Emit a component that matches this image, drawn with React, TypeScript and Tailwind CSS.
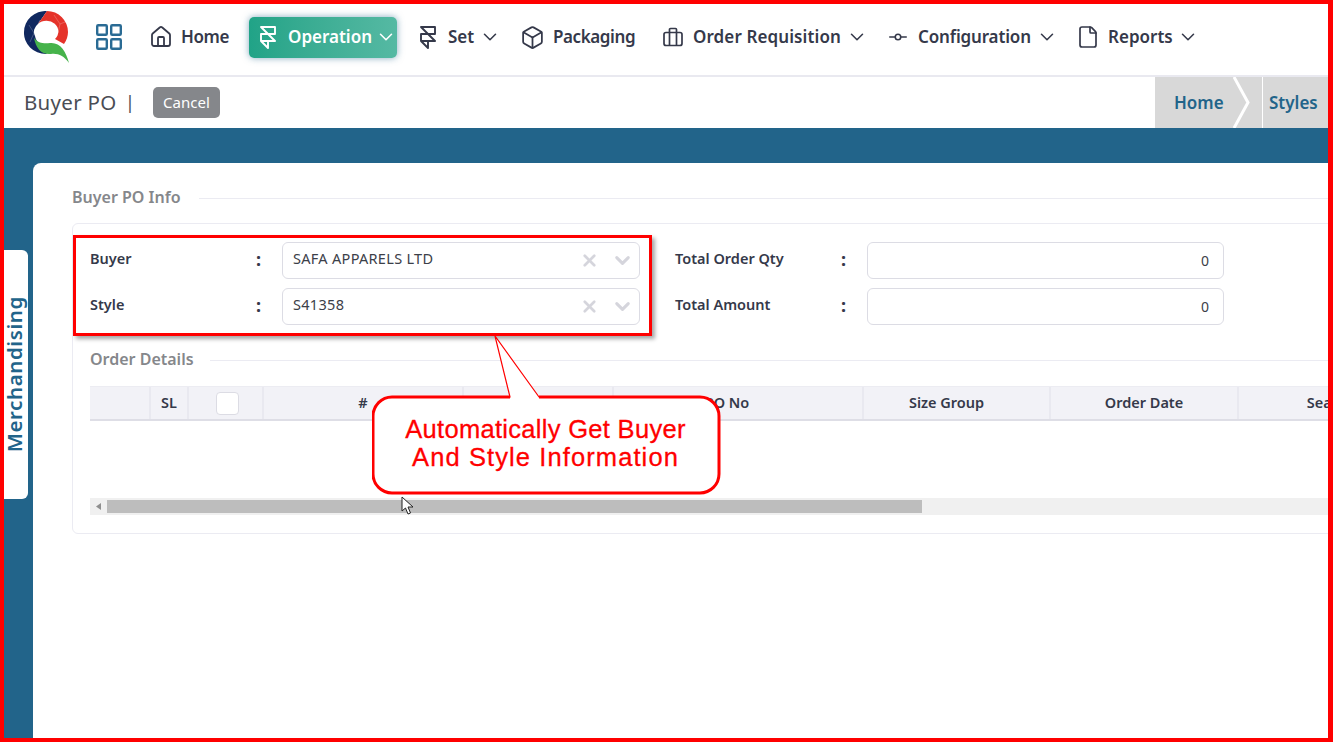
import React from "react";
import { Box, ChevronDown, File, Framer, GitCommitHorizontal, House, X } from "lucide-react";

const font = "font-['Noto_Sans',sans-serif]";

const NavItem: React.FC<{
	icon: React.ReactNode;
	label: string;
	labelClass: string;
	gap: string;
	caretGap?: string;
	className?: string;
}> = ({ icon, label, labelClass, gap, caretGap, className }) => (
	<div className={`flex items-center shrink-0 ${className ?? ""}`}>
		{icon}
		<span className={`${gap} ${labelClass} text-[17px] font-semibold text-[#35394a] whitespace-nowrap`}>{label}</span>
		{caretGap && <ChevronDown size={22} strokeWidth={1.7} className={`${caretGap} text-[#35394a]`} />}
	</div>
);

const Logo = () => (
	<svg width="46" height="52" viewBox="0 0 46 52" className="shrink-0">
		<path d="M23 0 A22 21 0 0 0 0 21 A22 21 0 0 0 22 43 L26 40 C16 36 12 30 11 25 A11 10 0 0 1 14 13 Z" fill="#10285f" />
		<path d="M23 0 A21 21 0 0 1 44 21 A21 21 0 0 1 40 33 L31 28 A11 10 0 0 0 14 13 Z" fill="#e5332a" />
		<path d="M10 27 C14 32 20 33 26 32 C36 31 42 40 45 52 C40 45 34 42 27 43 C18 44 12 38 10 27 Z" fill="#46b34b" />
		<path d="M5 14L10 22L6 31M10 22L16 9M30 4L36 13L41 11M36 13L34 22" fill="none" stroke="#ffffff" strokeOpacity="0.35" strokeWidth="0.6" />
	</svg>
);

const GridIcon = () => (
	<svg width="26" height="26" viewBox="0 0 26 26" fill="none" stroke="#2a6b94" strokeWidth="2.4" className="shrink-0">
		<rect x="1.2" y="1.2" width="9.6" height="9.6" rx="1" />
		<rect x="15.2" y="1.2" width="9.6" height="9.6" rx="1" />
		<rect x="1.2" y="15.2" width="9.6" height="9.6" rx="1" />
		<rect x="15.2" y="15.2" width="9.6" height="9.6" rx="1" />
	</svg>
);

const BagIcon = () => (
	<svg width="20" height="20" viewBox="0 0 20 20" fill="none" stroke="#35394a" strokeWidth="1.7" strokeLinejoin="round" className="shrink-0">
		<rect x="1" y="5.5" width="18" height="13" rx="2" />
		<path d="M6.5 5.5V2.5a1 1 0 0 1 1-1h5a1 1 0 0 1 1 1v3M6.5 5.5v13M13.5 5.5v13" />
	</svg>
);

const iconClass = "text-[#35394a] shrink-0";

const Navbar = () => (
	<div className="flex items-center h-[71px] pl-[24px] pb-[5px] bg-white">
		<Logo />
		<div className="ml-[26px]"><GridIcon /></div>
		<NavItem className="ml-[27px]" gap="ml-[8px]" labelClass="w-[47px] tracking-[-0.4px]" icon={<House size={24} strokeWidth={1.8} className={iconClass} />} label="Home" />
		<div className="ml-[21px] shrink-0 flex items-center w-[148px] h-[41px] pl-[7px] rounded-[5px] bg-gradient-to-r from-[#20a387] to-[#55b9a3] shadow-[0_0_7px_rgba(34,100,138,0.55)]">
			<Framer size={24} strokeWidth={1.9} className="text-white shrink-0" />
			<span className="ml-[8px] w-[83px] text-[17px] font-semibold text-white">Operation</span>
			<ChevronDown size={22} strokeWidth={1.7} className="ml-[4px] text-white shrink-0" />
		</div>
		<NavItem className="ml-[19px]" gap="ml-[8px]" labelClass="w-[27px]" caretGap="ml-[4px]" icon={<Framer size={24} strokeWidth={1.9} className={iconClass} />} label="Set" />
		<NavItem className="ml-[19px]" gap="ml-[8px]" labelClass="w-[81px] tracking-[-0.4px]" icon={<Box size={25} strokeWidth={1.7} className={iconClass} />} label="Packaging" />
		<NavItem className="ml-[29px]" gap="ml-[10px]" labelClass="w-[147px] tracking-[0.1px]" caretGap="ml-[6px]" icon={<BagIcon />} label="Order Requisition" />
		<NavItem className="ml-[19px]" gap="ml-[9px]" labelClass="w-[112px] tracking-[-0.15px]" caretGap="ml-[6px]" icon={<GitCommitHorizontal size={22} strokeWidth={1.7} className={iconClass} />} label="Configuration" />
		<NavItem className="ml-[18px]" gap="ml-[8px]" labelClass="w-[64px]" caretGap="ml-[5px]" icon={<File size={24} strokeWidth={1.7} className={iconClass} />} label="Reports" />
	</div>
);

const SubHeader = () => (
	<div className="flex items-center h-[53px] bg-white border-t-2 border-[#e9e9f0] pl-[24px]">
		<span className="w-[101px] text-[20.5px] text-[#4a4d55] tracking-[0.3px] whitespace-nowrap">Buyer PO</span>
		<span className="text-[18px] text-[#4a4d55]">|</span>
		<div className="ml-[18px] flex items-center justify-center w-[67px] h-[31px] rounded-[5px] bg-[#85878b] text-white text-[15px]">Cancel</div>
		<div className="ml-auto flex items-stretch self-stretch w-[178px] bg-[#d8d8d8] text-[#22648a] text-[17px] font-semibold">
			<span className="self-center ml-[19px] w-[47px]">Home</span>
			<svg width="18" height="51" viewBox="0 0 18 51" fill="none" stroke="#fff" strokeWidth="3" className="ml-[12px] shrink-0">
				<path d="M1 0L15 25.5L1 51" />
			</svg>
			<div className="ml-[11px] w-px bg-white" />
			<span className="self-center ml-[6px]">Styles</span>
		</div>
	</div>
);

const SelectBox: React.FC<{ value: string }> = ({ value }) => (
	<div className="flex items-center w-[358px] h-[37px] rounded-[6px] border border-[#dcdce4] bg-white pl-[10px] pr-[5px] text-[14.5px] text-[#3c4048]">
		<span className="flex-1 pb-[3px] tracking-[0.3px]">{value}</span>
		<X size={19} strokeWidth={3.4} className="text-[#d5d5dc]" />
		<ChevronDown size={23} strokeWidth={3.2} className="ml-[12px] text-[#d5d5dc]" />
	</div>
);

const NumberBox = () => (
	<div className="flex items-center justify-end w-[357px] h-[37px] rounded-[6px] border border-[#dcdce4] bg-white pr-[14px] text-[14px] text-[#3c4048]">0</div>
);

const FieldRow: React.FC<{ label: string; children: React.ReactNode }> = ({ label, children }) => (
	<div className="flex items-center">
		<span className="w-[166px] pb-[4px] text-[14.5px] font-semibold text-[#35394a] whitespace-nowrap">{label}</span>
		<span className="w-[26px] pb-[2px] text-[18px] font-bold text-[#35394a]">:</span>
		{children}
	</div>
);

const SectionTitle: React.FC<{ title: string; gap: string }> = ({ title, gap }) => (
	<div className="flex items-center">
		<span className="text-[16px] leading-[24px] font-semibold text-[#85878b] whitespace-nowrap">{title}</span>
		<div className={`${gap} mt-[2px] flex-1 h-px bg-[#ebebf2]`} />
	</div>
);

const columns = [
	{ label: "", cls: "w-[61px]" },
	{ label: "SL", cls: "w-[38px]" },
	{ label: "check", cls: "w-[75px]" },
	{ label: "#", cls: "w-[200px]" },
	{ label: "", cls: "w-[150px]" },
	{ label: "PO No", cls: "w-[250px] pr-[22px]" },
	{ label: "Size Group", cls: "w-[187px] pr-[20px]" },
	{ label: "Order Date", cls: "w-[188px]" },
	{ label: "Season", cls: "w-[188px]" },
];

const OrderTable = () => (
	<div className="flex h-[35px] w-[1340px] bg-[#f2f2f7] border-t border-b-2 border-t-[#ececf2] border-b-[#dedee6]">
		{columns.map((col, index) => (
			<div key={index} className={`${col.cls} shrink-0 flex items-center justify-center border-r-2 border-[#e9e9f0] text-[14.5px] font-semibold text-[#35394a] whitespace-nowrap`}>
				{col.label === "check" ? <div className="ml-[4px] w-[23px] h-[23px] rounded-[4px] border border-[#dcdce4] bg-white" /> : col.label}
			</div>
		))}
	</div>
);

const ScrollBar = () => (
	<div className="flex items-center h-[17px] bg-[#f0f0f0]">
		<svg width="17" height="17" viewBox="0 0 17 17" className="shrink-0"><path d="M11 5L6 8.5L11 12Z" fill="#8f8f8f" /></svg>
		<div className="w-[815px] h-[13px] bg-[#bdbdbd]" />
	</div>
);

const Callout = () => (
	<div className="absolute left-[372px] top-[336px] w-[349px] h-[160px]">
		<svg width="349" height="160" viewBox="0 0 349 160" className="absolute inset-0">
			<path
				d="M20 61 H138 L123 0 L167 61 H328 A19 19 0 0 1 347 80 V138 A19 19 0 0 1 328 157 H20 A19 19 0 0 1 1 138 V80 A19 19 0 0 1 20 61 Z"
				fill="#fff"
				stroke="#ff0000"
				strokeWidth="1.2"
			/>
			<path d="M138 61 H20 A19 19 0 0 0 1 80 V138 A19 19 0 0 0 20 157 H328 A19 19 0 0 0 347 138 V80 A19 19 0 0 0 328 61 H167" fill="none" stroke="#ff0000" strokeWidth="3" />
		</svg>
		<div className="absolute left-0 right-[2px] top-[79px] text-center text-[25.5px] leading-[28px] text-[#ff0000] font-['Liberation_Sans',sans-serif] [-webkit-text-stroke:0.3px_#ff0000] whitespace-nowrap">
			<div className="tracking-[0.3px]">Automatically Get Buyer</div>
			<div className="tracking-[1.1px]">And Style Information</div>
		</div>
	</div>
);

const Cursor = () => (
	<svg width="14" height="20" viewBox="0 0 14 20" className="absolute left-[401px] top-[496px]">
		<path d="M1 1V15L4.5 12L7 18L9.5 17L7 11H12Z" fill="#fff" stroke="#222" strokeWidth="1" strokeLinejoin="round" />
	</svg>
);

const App: React.FC = () => {
	return (
		<div className={`relative w-[1333px] h-[742px] overflow-hidden bg-[#22648a] ${font}`}>
			<div className="pt-[4px] bg-white"><Navbar /></div>
			<SubHeader />

			<div className="flex h-[614px]">
				<div className="w-[33px] shrink-0 flex flex-col pt-[122px]">
					<div className="ml-[4px] w-[24px] h-[249px] bg-white rounded-r-[6px] flex items-center justify-center">
						<span className="[writing-mode:vertical-rl] rotate-180 pl-[4px] text-[20.5px] font-semibold text-[#22648a] tracking-[0.6px]">Merchandising</span>
					</div>
				</div>
				<div className="mt-[35px] flex-1 bg-white rounded-tl-[8px] pl-[39px] pt-[22px] min-w-0">
					<SectionTitle title="Buyer PO Info" gap="ml-[18px]" />
					<div className="mt-[14px] -mr-[20px] h-[311px] border border-[#ebebf2] rounded-[6px] pl-[17px] pt-[18px] overflow-hidden">
						<div className="flex">
							<div className="flex flex-col gap-[9px]">
								<FieldRow label="Buyer"><SelectBox value="SAFA APPARELS LTD" /></FieldRow>
								<FieldRow label="Style"><SelectBox value="S41358" /></FieldRow>
							</div>
							<div className="ml-[35px] flex flex-col gap-[9px]">
								<FieldRow label="Total Order Qty"><NumberBox /></FieldRow>
								<FieldRow label="Total Amount"><NumberBox /></FieldRow>
							</div>
						</div>
						<div className="mt-[22px]"><SectionTitle title="Order Details" gap="ml-[16px]" /></div>
						<div className="mt-[15px]"><OrderTable /></div>
						<div className="mt-[77px]"><ScrollBar /></div>
					</div>
				</div>
			</div>

			{/* annotations drawn over the page */}
			<div className="absolute left-[73px] top-[235px] w-[579px] h-[101px] border-[3px] border-[#ff0000] shadow-[3px_3px_4px_rgba(0,0,0,0.35)]" />
			<Callout />
			<Cursor />
			<div className="absolute inset-0 border-[#ff0000] border-t-[4px] border-l-[4px] border-b-[4px] border-r-[5px] pointer-events-none" />
		</div>
	);
};

export default App;
